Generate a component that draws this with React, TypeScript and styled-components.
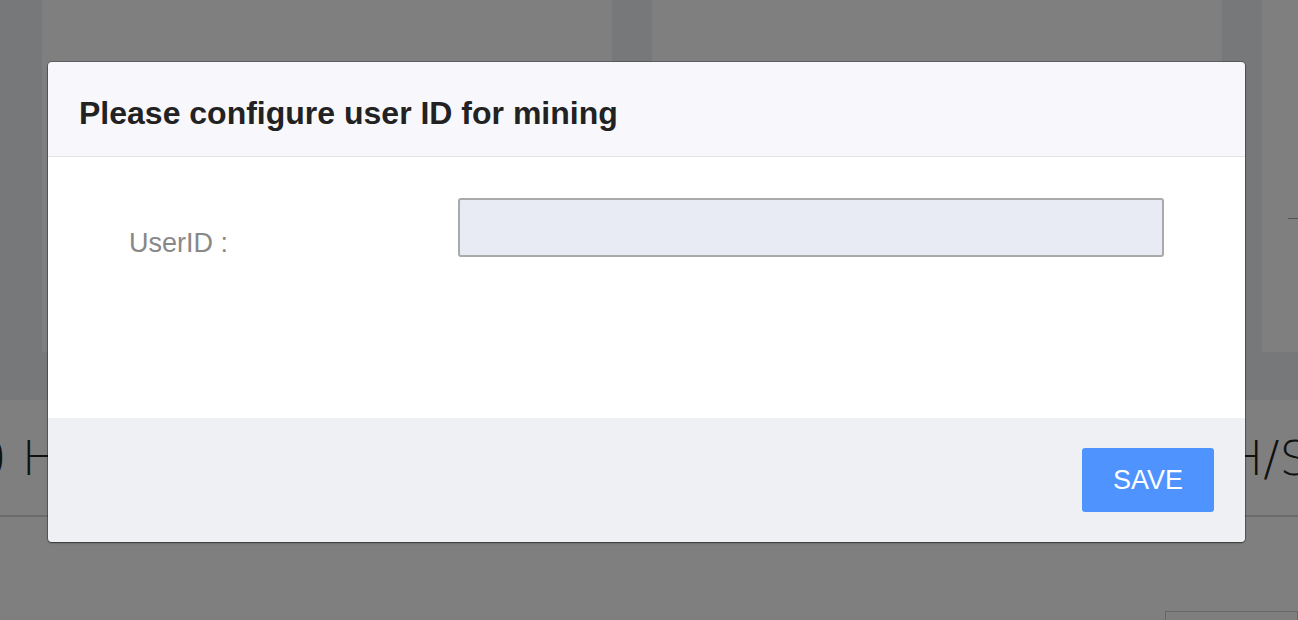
import React from "react"
import styled, { createGlobalStyle } from "styled-components"

const GlobalStyle = createGlobalStyle`
  html, body {
    margin: 0;
    padding: 0;
    overflow: hidden;
    background: #eef0f3;
    font-family: "Liberation Sans", Arial, sans-serif;
  }
`

// background page (dimmed by the overlay)
const Page = styled.div`
  width: 1298px;
  height: 620px;
  background: #eef0f3;
  display: flex;
  flex-direction: column;
`

const CardRow = styled.div`
  height: 352px;
  display: flex;
  gap: 40px;
  padding-left: 42px;
  overflow: hidden;
`

const Card = styled.div`
  flex: 0 0 570px;
  height: 100%;
  background: #fff;
  position: relative;
`

const Dash = styled.div`
  position: absolute;
  left: 26px;
  top: 218px;
  width: 12px;
  height: 1px;
  background: #aaa;
`

const StatSection = styled.div`
  margin-top: 48px;
  flex: 1;
  background: #fff;
  display: flex;
  flex-direction: column;
`

const StatRow = styled.div`
  height: 115px;
  border-bottom: 2px solid #d6d6d6;
  display: flex;
  align-items: center;
  justify-content: space-between;
  overflow: hidden;
`

const StatText = styled.span<{ $side: "left" | "right" }>`
  font-family: "DejaVu Sans ExtraLight", "DejaVu Sans", sans-serif;
  font-weight: 200;
  font-size: 48px;
  color: #222;
  white-space: nowrap;
  ${p => (p.$side === "left" ? "margin-left: -24px;" : "margin-right: -12px;")}
`

const StatFooter = styled.div`
  flex: 1;
  display: flex;
  justify-content: flex-end;
  align-items: flex-end;
`

const Box = styled.div`
  width: 131px;
  height: 8px;
  border: 1px solid #ccc;
  border-bottom: none;
`

// modal
const Overlay = styled.div`
  position: fixed;
  inset: 0;
  background: rgba(0, 0, 0, 0.5);
  display: flex;
  align-items: flex-start;
  padding: 62px 0 0 48px;
`

const Modal = styled.div`
  width: 1197px;
  height: 480px;
  border-radius: 4px;
  overflow: hidden;
  display: flex;
  flex-direction: column;
  box-shadow: 0 1px 2px rgba(0, 0, 0, 0.45), 0 0 0 1px rgba(0, 0, 0, 0.25);
`

const Header = styled.div`
  height: 61px;
  background: #f8f8fc;
  border-bottom: 1px solid #e3e3e8;
  padding: 33px 0 0 31px;
`

const Title = styled.h1`
  margin: 0;
  font-size: 32px;
  font-weight: bold;
  color: #222;
`

const Body = styled.div`
  height: 261px;
  background: #fff;
  padding-top: 41px;
  box-sizing: border-box;
`

const Field = styled.div`
  display: flex;
  align-items: flex-start;
`

const Label = styled.label`
  width: 410px;
  box-sizing: border-box;
  padding-left: 81px;
  padding-top: 30px;
  font-size: 27px;
  color: #888;
`

const Input = styled.input`
  width: 706px;
  height: 59px;
  box-sizing: border-box;
  background: #e8ebf3;
  border: 2px solid #aaa;
  border-radius: 3px;
  outline: none;
`

const Footer = styled.div`
  flex: 1;
  background: #eff0f4;
  display: flex;
  justify-content: flex-end;
  align-items: flex-start;
  padding: 30px 31px 0 0;
`

const SaveButton = styled.button`
  width: 132px;
  height: 64px;
  border: none;
  border-radius: 3px;
  background: #4f93ff;
  color: #fff;
  font-family: "Liberation Sans", Arial, sans-serif;
  font-size: 27px;
  cursor: pointer;
`

export default function App() {
  return (
    <>
      <GlobalStyle />
      <Page>
        <CardRow>
          <Card />
          <Card />
          <Card>
            <Dash />
          </Card>
        </CardRow>
        <StatSection>
          <StatRow>
            <StatText $side="left">0 H/S</StatText>
            <StatText $side="right">0 H/S</StatText>
          </StatRow>
          <StatFooter>
            <Box />
          </StatFooter>
        </StatSection>
      </Page>
      <Overlay>
        <Modal>
          <Header>
            <Title>Please configure user ID for mining</Title>
          </Header>
          <Body>
            <Field>
              <Label htmlFor="userid">UserID :</Label>
              <Input id="userid" />
            </Field>
          </Body>
          <Footer>
            <SaveButton>SAVE</SaveButton>
          </Footer>
        </Modal>
      </Overlay>
    </>
  )
}
